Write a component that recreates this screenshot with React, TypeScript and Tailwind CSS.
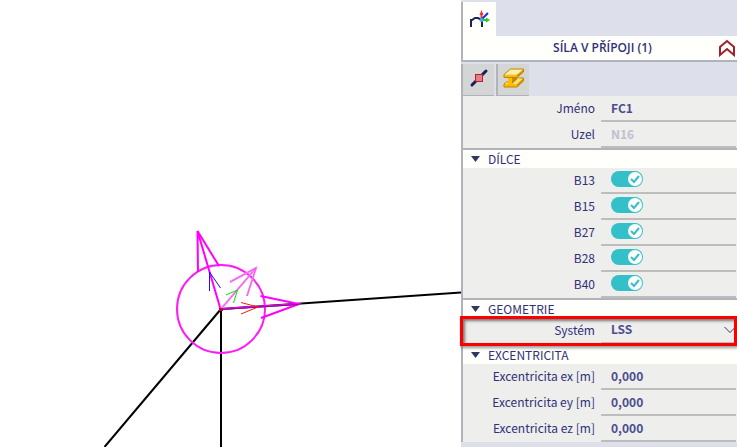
import { useState, type ReactNode } from "react";

function ModelView() {
  return (
    <svg viewBox="0 0 461 447" preserveAspectRatio="xMinYMin slice" className="h-full w-full" fill="none" role="img" aria-label="Model">
      <g stroke="#000000" strokeWidth="2">
        <path d="M221 309L461 292.500" />
        <path d="M221 309L104.500 447" />
        <path d="M221 309V447" />
      </g>
      <circle cx="221" cy="309" r="44" stroke="#ff1cf4" strokeWidth="2" />
      <g stroke="#ff00ff" strokeWidth="2">
        <path d="M220.500 309L197.500 231L198 272" />
        <path d="M197.500 231L219 266" />
        <path d="M260.500 296L299 304L261 318" />
      </g>
      <path d="M221 309L299 304" stroke="#ff00ff" strokeWidth="2" />
      <path d="M221 309.500L299 304.500" stroke="#7a1680" strokeWidth="1" />
      <g stroke="#f884f4" strokeWidth="2">
        <path d="M221 309L256 268" />
        <path d="M230 282L256 268L247 296" />
      </g>
      <g stroke="#f040ec" strokeWidth="1" strokeDasharray="1 1">
        <path d="M221 309L256 268" />
        <path d="M230 282L256 268L247 296" />
      </g>
      <path d="M209.500 291V272L220.500 288" stroke="#1414ff" />
      <path d="M226 295L237.500 290L233.500 303" stroke="#00e800" />
      <path d="M241 302.500L258 307L241 314" stroke="#ff1414" />
      <path d="M219 308h4v3h-4z" fill="#cc0048" />
    </svg>
  );
}

function FrameIcon() {
  return (
    <svg width="20" height="18" viewBox="0 0 20 18" fill="none" aria-hidden="true">
      <path d="M1 17V10H2L5 8H8L12 10V17" stroke="#20205c" strokeWidth="2" />
      <path d="M11.500 9V3" stroke="#f03038" strokeWidth="2" />
      <path d="M9.500 5L11.500 0L13.500 5z" fill="#f03038" />
      <path d="M12 9L18 3" stroke="#2028e8" strokeWidth="2" />
      <path d="M12 10H18" stroke="#28c828" strokeWidth="2" />
      <path d="M16 7.500L20 10L16 12.500z" fill="#28c828" />
      <circle cx="11.500" cy="10" r="2" fill="#30b8c8" />
    </svg>
  );
}

function NodeIcon() {
  return (
    <svg width="20" height="20" viewBox="0 0 20 20" fill="none" aria-hidden="true">
      <path d="M3 17L17 3" stroke="#1c1c60" strokeWidth="3" strokeLinecap="round" />
      <rect x="6.500" y="6.500" width="7" height="7" fill="#e08088" stroke="#b81c30" />
    </svg>
  );
}

function BeamIcon() {
  return (
    <svg width="22" height="20" viewBox="0 0 22 20" aria-hidden="true" strokeLinejoin="round">
      <path d="M1 16L3.500 14H10L15 10H20.500V13L14 19H1z" fill="#ffe480" />
      <path d="M1 16H14V19H1z" fill="#ffbc00" />
      <path d="M14 16L20.500 10V13L14 19z" fill="#d89400" />
      <path d="M1 16L3.500 14H5M15.500 10H20.500V13L14 19H1V16" fill="none" stroke="#c08400" />
      <path d="M5 9H9V16H5z" fill="#ffbc00" />
      <path d="M9 9L14.500 6V11L9 16z" fill="#c88800" />
      <path d="M14 6.500L20.500 1V4L14 9.500z" fill="#d89400" />
      <path d="M1 6.500H14V9.500H1z" fill="#ffbc00" />
      <path d="M1 6.500L7.500 1H20.500L14 6.500z" fill="#fff0a8" />
      <path d="M1 6.500L7.500 1H20.500V4L14 9.500H1z" fill="none" stroke="#c08400" />
    </svg>
  );
}

function Row({ id, label, children }: { id: string; label: string; children: ReactNode }) {
  return (
    <div className="flex h-[26px] pr-px">
      <label htmlFor={id} className="w-[132px] shrink-0 text-right leading-6">{label}</label>
      <div className="ml-1.5 flex min-w-0 flex-1 items-start border-b-2 border-[#bdbdbd] pl-2.5">{children}</div>
    </div>
  );
}

function TextRow({ id, label, value, disabled = false }: { id: string; label: string; value: string; disabled?: boolean }) {
  return (
    <Row id={id} label={label}>
      <input id={id} defaultValue={value} disabled={disabled} className="h-[22px] w-full bg-transparent font-bold text-[#4c4c8e] outline-none disabled:text-[#c0c1d0]" />
    </Row>
  );
}

function ToggleRow({ name }: { name: string }) {
  return (
    <Row id={name} label={name}>
      <span className="relative mt-[3px] flex">
        <input id={name} type="checkbox" defaultChecked className="peer h-4 w-8 appearance-none rounded-full bg-[#a8abb5] checked:bg-[#33c0c8]" />
        <svg viewBox="0 0 14 14" fill="none" aria-hidden="true" className="pointer-events-none absolute top-px left-px size-3.5 peer-checked:left-[17px]">
          <circle cx="7" cy="7" r="7" fill="#ffffff" />
          <path d="M3 7L6 10L11 4" stroke="#33c0c8" strokeWidth="2" />
        </svg>
      </span>
    </Row>
  );
}

function Section({ title, children }: { title: string; children: ReactNode }) {
  const [open, setOpen] = useState(true);
  return (
    <section className="border-b-2 border-l-2 border-[#b0b2bc] bg-[#eeeeed] last:border-b-0">
      <h2 className="bg-[#fffffb]">
        <button type="button" aria-expanded={open} onClick={() => setOpen(!open)} className="flex h-[18px] w-full items-center gap-2 pl-2 text-left leading-[18px]">
          <svg width="9" height="6" viewBox="0 0 9 6" fill="#303860" aria-hidden="true">
            <path d="M0 0H9L4.500 6z" />
          </svg>
          {title}
        </button>
      </h2>
      {open && children}
    </section>
  );
}

export default function App() {
  return (
    <div className="flex h-screen bg-white font-['Noto_Sans_CJK_SC',sans-serif] text-[12px] text-[#303078]">
      <main className="min-w-0 flex-1 overflow-hidden">
        <ModelView />
      </main>
      <aside className="w-[276px] shrink-0 bg-[#dde0ea]">
        <div className="pt-0.5">
          <button type="button" aria-label="Model" className="flex h-[34px] w-[35px] items-center justify-center border-l-2 border-[#b0b2bc] bg-[#fffffb]">
            <FrameIcon />
          </button>
        </div>
        <header className="flex h-[26px] items-center border-b-2 border-l-2 border-[#b0b2bc] bg-[#fffffb]">
          <h1 className="flex-1 pl-6 text-center font-['Open_Sans',sans-serif] font-semibold">SÍLA V PŘÍPOJI (1)</h1>
          <button type="button" aria-label="Sbalit" className="pr-px">
            <svg width="18" height="18" viewBox="0 0 18 18" fill="none" stroke="#a02030" strokeWidth="2" aria-hidden="true">
              <path d="M2 16V8L9 2L16 8V16L9 10z" />
            </svg>
          </button>
        </header>
        <div className="flex h-[34px] gap-0.5 pt-0.5">
          <button type="button" aria-label="Uzel" className="flex w-[33px] items-center justify-center border-b border-l-2 border-[#b0b2bc] bg-[#d4d5d5] pb-1">
            <NodeIcon />
          </button>
          <button type="button" aria-label="Profil" className="flex w-[33px] items-center justify-center border-b border-l-2 border-[#b0b2bc] bg-[#d4d5d5] pb-1">
            <BeamIcon />
          </button>
        </div>
        <div className="border-b-2 border-l-2 border-[#b0b2bc] bg-[#eeeeed]">
          <TextRow id="name" label="Jméno" value="FC1" />
          <TextRow id="node" label="Uzel" value="N16" disabled />
        </div>
        <Section title="DÍLCE">
          <ToggleRow name="B13" />
          <ToggleRow name="B15" />
          <ToggleRow name="B27" />
          <ToggleRow name="B28" />
          <ToggleRow name="B40" />
        </Section>
        <Section title="GEOMETRIE">
          <div className="relative">
            <Row id="system" label="Systém">
              <select id="system" className="h-[22px] w-full appearance-none bg-transparent font-bold text-[#4c4c8e] outline-none">
                <option>LSS</option>
                <option>GSS</option>
              </select>
              <svg width="12" height="8" viewBox="0 0 12 8" fill="none" stroke="#363671" aria-hidden="true" className="pointer-events-none -ml-3 self-center">
                <path d="M0.500 1L6 6.500L11.500 1" />
              </svg>
            </Row>
            <div className="pointer-events-none absolute -inset-y-0.5 right-0 -left-[3px] border-3 border-[#fa0000] shadow-[1px_2px_3px_#00000066,inset_2px_2px_3px_#00000080]" />
          </div>
        </Section>
        <Section title="EXCENTRICITA">
          <TextRow id="ex" label="Excentricita ex [m]" value="0,000" />
          <TextRow id="ey" label="Excentricita ey [m]" value="0,000" />
          <TextRow id="ez" label="Excentricita ez [m]" value="0,000" />
        </Section>
      </aside>
    </div>
  );
}
